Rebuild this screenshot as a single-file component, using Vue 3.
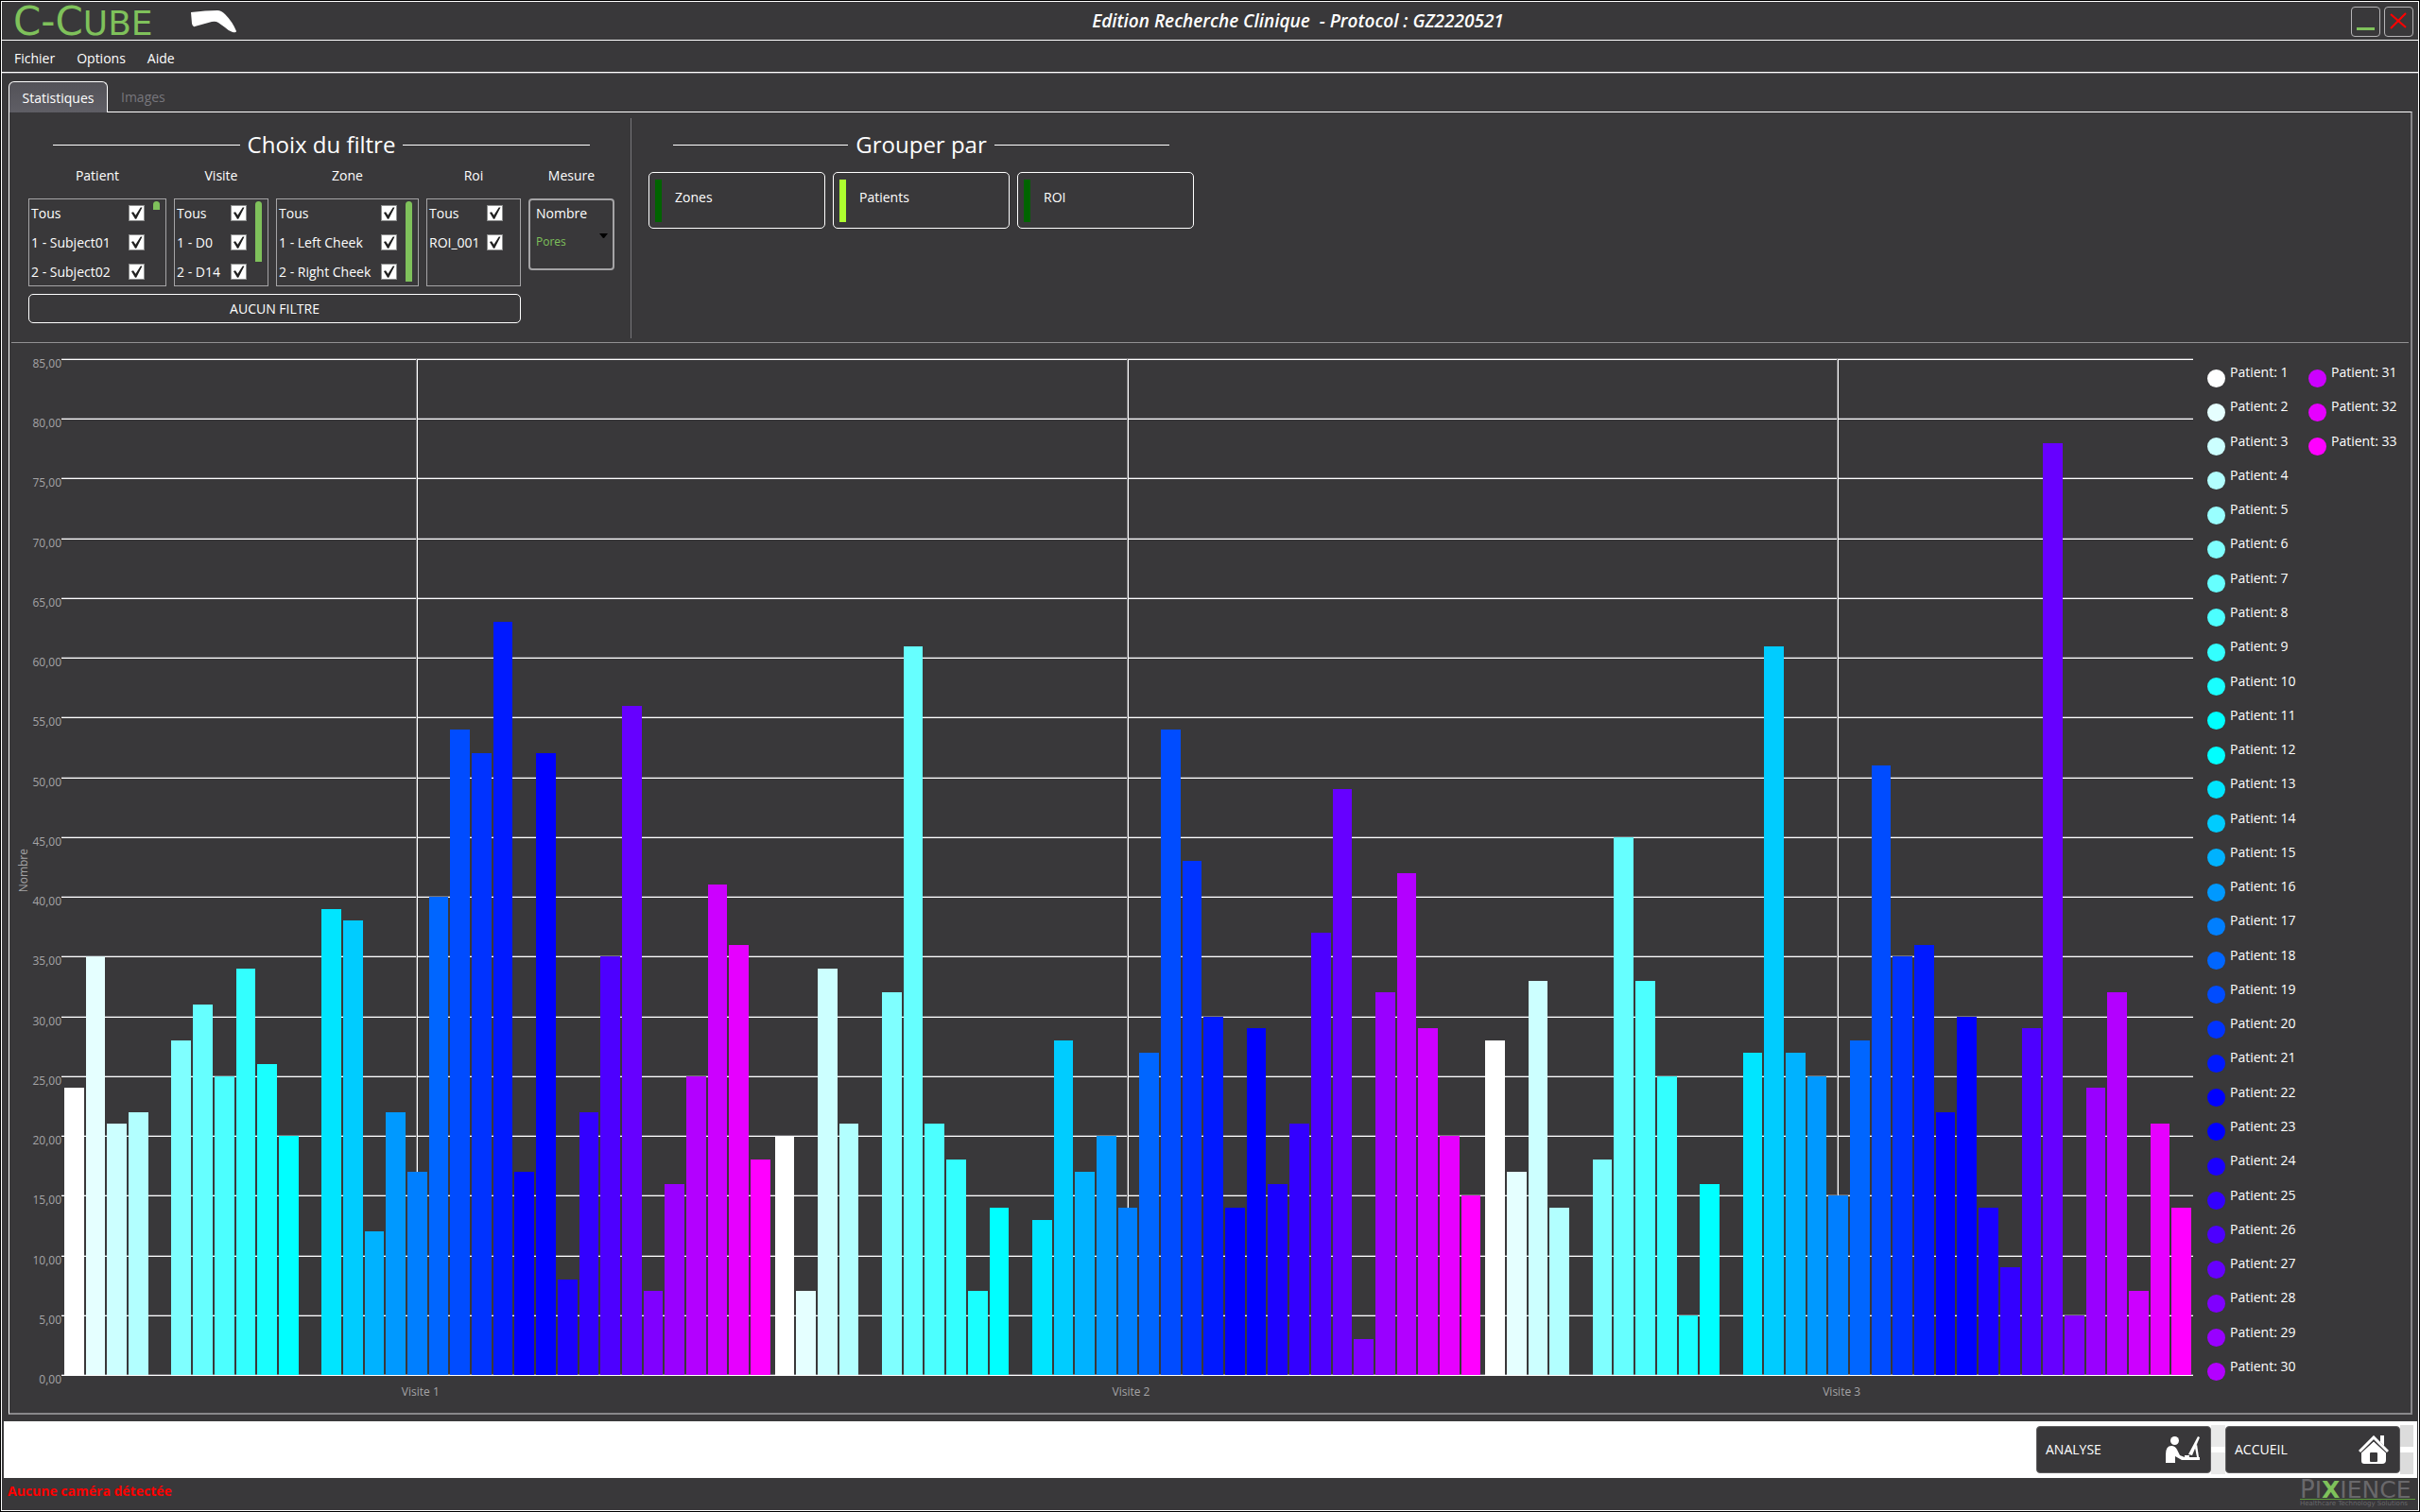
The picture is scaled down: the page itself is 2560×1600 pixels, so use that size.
<script setup>
import { ref } from 'vue'

const menus = ['Fichier', 'Options', 'Aide']

const filters = ref([
  { title: 'Patient', thumb: 10, rows: [['Tous', true], ['1 - Subject01', true], ['2 - Subject02', true]] },
  { title: 'Visite', thumb: 70, rows: [['Tous', true], ['1 - D0', true], ['2 - D14', true]] },
  { title: 'Zone', thumb: 95, rows: [['Tous', true], ['1 - Left Cheek', true], ['2 - Right Cheek', true]] },
  { title: 'Roi', thumb: 0, rows: [['Tous', true], ['ROI_001', true]] },
])

const groupings = [
  { name: 'Zones', on: false },
  { name: 'Patients', on: true },
  { name: 'ROI', on: false },
]

const MAX = 85
const ticks = Array.from({ length: 17 }, (_, i) => `${MAX - i * 5},00`)

const visits = [
  { name: 'Visite 1', values: [24, 35, 21, 22, 0, 28, 31, 25, 34, 26, 20, 0, 39, 38, 12, 22, 17, 40, 54, 52, 63, 17, 52, 8, 22, 35, 56, 7, 16, 25, 41, 36, 18] },
  { name: 'Visite 2', values: [20, 7, 34, 21, 0, 32, 61, 21, 18, 7, 14, 0, 13, 28, 17, 20, 14, 27, 54, 43, 30, 14, 29, 16, 21, 37, 49, 3, 32, 42, 29, 20, 15] },
  { name: 'Visite 3', values: [28, 17, 33, 14, 0, 18, 45, 33, 25, 5, 16, 0, 27, 61, 27, 25, 15, 28, 51, 35, 36, 22, 30, 14, 9, 29, 78, 5, 24, 32, 7, 21, 14] },
]

// White to cyan, cyan to blue, blue to magenta, eleven patients each.
function colour(i) {
  const step = Math.round((i % 11) * 25.5)
  if (i < 11) return `rgb(${255 - step}, 255, 255)`
  if (i < 22) return `rgb(0, ${255 - step}, 255)`
  return `rgb(${step}, 0, 255)`
}

const patients = Array.from({ length: 33 }, (_, i) => ({ id: i + 1, colour: colour(i) }))
</script>

<template>
  <div class="window">
    <header class="titlebar">
      <div class="brand">
        <span class="wordmark">C-C<small>UBE</small></span>
        <svg class="boomerang" viewBox="0 0 48 24" aria-hidden="true">
          <path d="M0 2 Q16 0 28 0 Q32 0 36 4 Q44 12 48 22 Q48 24 44 23 Q40 22 36 18 L29 13 Q26 11 22 12 L4 17 Q2 18 1 14 Z" fill="#fff" />
        </svg>
      </div>
      <h1>Edition Recherche Clinique&nbsp; - Protocol : GZ2220521</h1>
      <div class="winbuttons">
        <button type="button" aria-label="Réduire">
          <svg viewBox="0 0 29 30"><rect x="5" y="21" width="19" height="3" fill="#7fc15b" /></svg>
        </button>
        <button type="button" aria-label="Fermer">
          <svg viewBox="0 0 29 30"><path d="M6 7 L22 21 M22 6 L6 22" stroke="#f00" stroke-width="2" fill="none" /></svg>
        </button>
      </div>
    </header>

    <nav class="menubar">
      <button v-for="m in menus" :key="m" type="button">{{ m }}</button>
    </nav>

    <div class="tabs">
      <button type="button" class="tab active">Statistiques</button>
      <button type="button" class="tab" disabled>Images</button>
    </div>

    <main class="panel">
      <section class="controls">
        <div class="filter">
          <h2><span>Choix du filtre</span></h2>
          <div class="columns">
            <h3 v-for="f in filters" :key="f.title">{{ f.title }}</h3>
            <h3>Mesure</h3>
            <div v-for="f in filters" :key="f.title + '-list'" class="list" :class="{ plain: !f.thumb }">
              <label v-for="row in f.rows" :key="row[0]">
                <span>{{ row[0] }}</span>
                <input v-model="row[1]" type="checkbox" />
              </label>
              <i v-if="f.thumb" class="thumb" :style="{ height: f.thumb + '%' }"></i>
            </div>
            <div class="measure">
              <select aria-label="Mesure"><option>Nombre</option></select>
              <span>Pores</span>
              <svg viewBox="0 0 9 5" aria-hidden="true"><path d="M0 0 H9 L5 5 H4 Z" fill="#000" /></svg>
            </div>
            <button type="button" class="nofilter">AUCUN FILTRE</button>
          </div>
        </div>
        <div class="grouping">
          <h2><span>Grouper par</span></h2>
          <div class="choices">
            <button v-for="g in groupings" :key="g.name" type="button" :class="{ on: g.on }">
              <i></i><span>{{ g.name }}</span>
            </button>
          </div>
        </div>
      </section>

      <section class="chart">
        <div class="ytitle"><span>Nombre</span></div>
        <div class="yaxis">
          <span v-for="t in ticks" :key="t">{{ t }}</span>
          <span class="zero">0,00</span>
        </div>
        <div class="plot">
          <div class="gridlines"><i v-for="t in ticks" :key="t"></i></div>
          <div class="groups">
            <div v-for="v in visits" :key="v.name" class="group">
              <i
                v-for="(n, i) in v.values"
                :key="i"
                :style="{ height: (n / MAX) * 100 + '%', background: colour(i) }"
              ></i>
            </div>
          </div>
          <div class="xaxis"><span v-for="v in visits" :key="v.name">{{ v.name }}</span></div>
        </div>
        <ul class="legend">
          <li v-for="p in patients" :key="p.id">
            <i :style="{ background: p.colour }"></i><span>Patient: {{ p.id }}</span>
          </li>
        </ul>
      </section>
    </main>

    <div class="actions">
      <button type="button">
        <span>ANALYSE</span>
        <svg viewBox="0 0 36 28" width="36" height="28" fill="#fff" aria-hidden="true">
          <circle cx="9.500" cy="4.500" r="4.500" />
          <path d="M0 28 V19 Q0 10 6 10 Q10 10 12 14 L15 20 L20 22 V20 H25 V22 H36 V25 H17 L10 21 V28 Z" />
          <path d="M34 0 L36 1 L28 20 L24 19 Z" />
          <path d="M33 8 L35 22 H33 L31 12 Z" />
        </svg>
      </button>
      <i class="link"></i>
      <button type="button">
        <span>ACCUEIL</span>
        <svg viewBox="0 0 32 30" width="32" height="30" aria-hidden="true">
          <path d="M3 18 L16 6 L29 18 V26 Q29 30 25 30 H6 Q3 30 3 27 Z" fill="#fff" />
          <path d="M1 17 L16 3 L31 17" fill="none" stroke="#39383a" stroke-width="5" />
          <path d="M1 17 L16 2 L31 17" fill="none" stroke="#fff" stroke-width="3" />
          <path d="M23 0 H27 V11 L23 7 Z" fill="#fff" />
          <rect x="12" y="18" width="8" height="10" rx="1" fill="#39383a" />
        </svg>
      </button>
      <i class="link end"></i>
    </div>

    <footer class="status">
      <span class="warning">Aucune caméra détectée</span>
      <div class="vendor">
        <span class="name">P<small>I<b>X</b>IENCE</small></span>
        <span class="tagline">Healthcare Technology Solutions</span>
      </div>
    </footer>
  </div>
</template>

<style>
body {
  margin: 0;
  background: #000;
}
</style>

<style scoped>
* {
  box-sizing: border-box;
}
.window {
  min-height: calc(100vh - 2px);
  margin: 1px;
  border: 1px solid #fff;
  background: #39383a;
  color: #fff;
  display: flex;
  flex-direction: column;
  font: 500 14px/20px "Open Sans", "Noto Sans", sans-serif;
}
button,
select {
  font: inherit;
  color: inherit;
  background: none;
  border: 0;
  padding: 0;
  margin: 0;
}
h1,
h2,
h3,
ul {
  margin: 0;
  padding: 0;
}

/* Title bar and menu */
.titlebar {
  height: 41px;
  border-bottom: 1px solid #fff;
  display: grid;
  grid-template-columns: 1fr auto 1fr;
  align-items: center;
}
.brand {
  display: flex;
  align-items: center;
  padding-left: 12px;
}
.wordmark {
  width: 188px;
  padding-top: 2px;
  color: #7fc15b;
  font: 42px/38px "DejaVu Sans", sans-serif;
}
.wordmark small {
  font-size: 36px;
}
.boomerang {
  width: 48px;
  height: 24px;
}
.titlebar h1 {
  font: italic 600 19px/24px "Open Sans", "Noto Sans", sans-serif;
  padding: 0 0 2px 186px;
}
.winbuttons {
  display: flex;
  justify-content: flex-end;
  gap: 4px;
  padding-right: 5px;
}
.winbuttons button {
  width: 31px;
  height: 32px;
  border: 1px solid #b5b4b6;
  border-radius: 4px;
}
.winbuttons svg {
  display: block;
}
.menubar {
  height: 35px;
  border-bottom: 1px solid #77767a;
  box-shadow: inset 0 -1px #fff;
  display: flex;
  align-items: center;
  gap: 23px;
  padding: 3px 0 0 13px;
}

/* Tabs */
.tabs {
  display: flex;
  padding: 8px 0 0 7px;
}
.tab {
  height: 33px;
  margin-bottom: -1px;
  padding: 1px 14px 0;
  color: #77767c;
}
.tab.active {
  width: 105px;
  padding: 1px 0 0;
  color: #fff;
  background: linear-gradient(#535258, #5f5e65);
  border: 1px solid #fff;
  border-bottom: 0;
  border-radius: 6px 6px 0 0;
  position: relative;
}
.panel {
  flex: 1;
  margin: 0 6px 7px 7px;
  border: 2px solid #89888b;
  border-top: 1px solid #fff;
  border-left: 1px solid #fff;
  display: flex;
  flex-direction: column;
}

/* Filters */
.controls {
  height: 244px;
  margin: 0 2px;
  border-bottom: 1px solid #929193;
  display: flex;
}
.filter {
  width: 656px;
  margin: 6px 0 4px;
  padding: 8px 17px 0 18px;
  border-right: 1px solid #77767a;
}
h2 {
  display: flex;
  align-items: center;
  gap: 8px;
  padding: 0 26px;
  font-size: 24px;
  font-weight: 500;
  line-height: 40px;
}
h2::before,
h2::after {
  content: "";
  flex: 1;
  height: 1px;
  background: #fff;
}
.columns {
  display: grid;
  grid-template-columns: 146px 100px 151px 100px 91px;
  column-gap: 8px;
}
h3 {
  font-size: 14px;
  font-weight: 500;
  line-height: 26px;
  text-align: center;
}
.list {
  position: relative;
  height: 93px;
  margin-top: 11px;
  border: 1px solid #a5a4a6;
}
.list label {
  display: flex;
  align-items: center;
  justify-content: space-between;
  height: 31px;
  padding: 0 22px 2px 2px;
  white-space: nowrap;
}
.list.plain label {
  padding-right: 18px;
}
.list input {
  appearance: none;
  flex: none;
  width: 17px;
  height: 17px;
  margin: 0;
  border: 1px solid #8e8f8f;
  background: #fff;
}
.list input:checked::before {
  content: "";
  display: block;
  width: 15px;
  height: 15px;
  background: #212121;
  clip-path: polygon(13% 47%, 27% 42%, 43% 65%, 78% 10%, 90% 10%, 48% 92%, 40% 92%);
}
.thumb {
  position: absolute;
  top: 2px;
  right: 6px;
  width: 7px;
  max-height: 85px;
  background: #7fc15b;
  border-radius: 4px 4px 0 0;
}
.measure {
  position: relative;
  height: 76px;
  margin-top: 11px;
  border: 2px solid #a5a4a6;
  border-radius: 4px;
  padding: 4px 6px;
  display: flex;
  flex-direction: column;
  gap: 10px;
}
.measure select {
  appearance: none;
  width: 100%;
}
.measure span {
  font-size: 12px;
  color: #7fc15b;
}
.measure svg {
  position: absolute;
  right: 5px;
  top: 35px;
  width: 9px;
  height: 5px;
}
.nofilter {
  grid-column: 1 / 5;
  height: 31px;
  margin-top: 8px;
  border: 1px solid #fff;
  border-radius: 5px;
}

/* Grouping */
.grouping {
  padding: 14px 18px;
}
.choices {
  display: flex;
  gap: 8px;
  padding-top: 9px;
}
.choices button {
  width: 187px;
  height: 60px;
  border: 1px solid #fff;
  border-radius: 5px;
  display: flex;
  align-items: center;
  gap: 14px;
  padding: 0 6px;
}
.choices i {
  width: 7px;
  height: 45px;
  background: #006400;
}
.choices .on i {
  background: #adff2f;
}
.choices span {
  padding-bottom: 6px;
}

/* Chart */
.chart {
  flex: 1;
  display: flex;
  padding: 16px 0 0;
}
.ytitle,
.yaxis,
.xaxis {
  color: #a5a4a6;
  font: 500 12px/12px "Open Sans", sans-serif;
}
.ytitle {
  width: 27px;
  display: flex;
  align-items: center;
  justify-content: center;
  padding-bottom: 32px;
  padding-left: 2px;
}
.ytitle span {
  writing-mode: vertical-rl;
  transform: rotate(180deg);
}
.yaxis {
  width: 28px;
  margin-bottom: 41px;
  display: flex;
  flex-direction: column;
  align-items: flex-end;
}
.yaxis span {
  flex: 1 0 0;
}
.yaxis .zero {
  flex: none;
  height: 0;
}
.plot {
  flex: 1;
  display: grid;
  grid-template: 1fr 41px / 1fr;
}
.gridlines {
  grid-area: 1 / 1;
  display: flex;
  flex-direction: column;
  box-shadow: 0 1px #77767a, 0 2px #fff;
}
.gridlines i {
  flex: 1;
  background: linear-gradient(#77767a 1px, #fff 1px, #fff 2px, transparent 2px);
}
.groups {
  grid-area: 1 / 1;
  margin: 1px 0 -1px;
  display: flex;
}
.group {
  flex: 1;
  display: flex;
  align-items: flex-end;
  padding: 0 1px 0 2px;
  background: linear-gradient(90deg, #77767a 1px, #fff 1px) center / 2px 100% no-repeat;
}
.group i {
  flex: 1;
  margin: 0 1px;
}
.xaxis {
  grid-area: 2 / 1;
  display: flex;
  margin: 0 -4px 0 4px;
  padding-top: 13px;
}
.xaxis span {
  flex: 1;
  text-align: center;
}
.legend {
  width: 230px;
  margin: 0 0 25px;
  padding: 3px 0 0 15px;
  list-style: none;
  display: grid;
  grid-auto-flow: column;
  grid-template-rows: repeat(30, 1fr);
  grid-template-columns: 107px 107px;
}
.legend li {
  display: flex;
  align-items: center;
  gap: 5px;
}
.legend i {
  width: 19px;
  height: 19px;
  border-radius: 50%;
}
.legend span {
  padding-bottom: 12px;
}

/* Bottom bar and status */
.actions {
  height: 60px;
  margin: 0 1px 0 2px;
  padding-right: 4px;
  background: #fff;
  display: flex;
  justify-content: flex-end;
  align-items: center;
}
.actions button {
  width: 185px;
  height: 50px;
  border: 1px solid #5f5e60;
  border-radius: 4px;
  background: #39383a;
  padding: 0 11px 0 9px;
  display: flex;
  align-items: center;
  justify-content: space-between;
}
.link {
  width: 15px;
  height: 52px;
  background: linear-gradient(#e9e9e9 23px, #fff 23px, #fff 29px, #e9e9e9 29px);
}
.link.end {
  width: 14px;
  background: linear-gradient(#dcdcdc 23px, #fff 23px, #fff 29px, #dcdcdc 29px);
}
.status {
  height: 34px;
  padding: 0 3px 0 6px;
  display: flex;
  justify-content: space-between;
}
.warning {
  color: #f00;
  font: 700 14px/28px "Open Sans", sans-serif;
}
.vendor {
  width: 122px;
  color: #69686b;
  display: flex;
  flex-direction: column;
  padding-top: 3px;
  font-family: "DejaVu Sans", sans-serif;
}
.vendor .name {
  font-size: 26px;
  line-height: 19px;
  border-bottom: 1px solid #5d9a3c;
}
.vendor small {
  font-size: 25px;
}
.vendor b {
  color: #7fc15b;
}
.vendor .tagline {
  font-size: 7px;
  line-height: 9px;
  white-space: nowrap;
}
</style>
